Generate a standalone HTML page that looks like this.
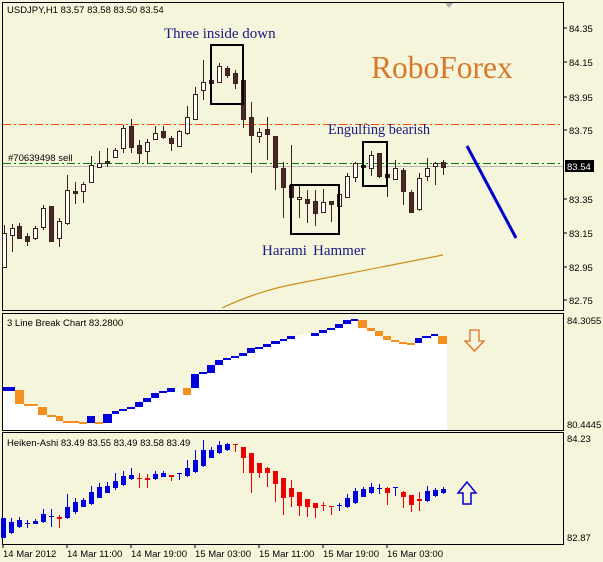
<!DOCTYPE html>
<html><head><meta charset="utf-8"><style>
html,body{margin:0;padding:0;background:#F5F5DC;width:603px;height:562px;overflow:hidden}
svg{display:block}
.ax{font-family:"Liberation Sans",sans-serif;font-size:9.5px;fill:#000}
.lb{font-family:"Liberation Sans",sans-serif;font-size:9.5px;fill:#000}
.an{font-family:"Liberation Serif",serif;font-size:15px;fill:#1a1a80}
</style></head><body>
<svg id="s" width="603" height="562" xmlns="http://www.w3.org/2000/svg">
<rect width="603" height="562" fill="#F5F5DC"/>
<rect x="2.5" y="2.5" width="561" height="308" fill="none" stroke="#000"/>
<rect x="2.5" y="313.5" width="561" height="117" fill="none" stroke="#000"/>
<rect x="2.5" y="432.5" width="561" height="112" fill="none" stroke="#000"/>
<polygon points="445,3 453,3 449,8" fill="#b0b0b0"/>
<line x1="3" y1="124.5" x2="563" y2="124.5" stroke="#ff4500" stroke-dasharray="8,3,2,3"/>
<line x1="3" y1="163.5" x2="563" y2="163.5" stroke="#008000" stroke-dasharray="8,3,2,3"/>
<line x1="3" y1="166.5" x2="563" y2="166.5" stroke="#b8b8b0"/>
<path d="M222,308 Q260,290 300,283 L443,255" fill="none" stroke="#c8901a" stroke-width="1.2"/>
<line x1="467" y1="146" x2="516" y2="238" stroke="#0000cc" stroke-width="3"/>
<g id="main"></g>
<rect x="211" y="45" width="32" height="59" fill="none" stroke="#000" stroke-width="2"/>
<rect x="291" y="185" width="48" height="49" fill="none" stroke="#000" stroke-width="2"/>
<rect x="363" y="142" width="24" height="44" fill="none" stroke="#000" stroke-width="2"/>
<text x="7" y="13" class="lb">USDJPY,H1  83.57 83.58 83.50 83.54</text>
<text x="8" y="161" class="lb" fill="#000">#70639498 sell</text>
<text x="164" y="38" class="an">Three inside down</text>
<text x="328" y="134" class="an" style="font-size:14.3px">Engulfing bearish</text>
<text x="262" y="255" class="an">Harami</text>
<text x="313" y="255" class="an">Hammer</text>
<text x="371" y="78" font-family="Liberation Serif,serif" font-size="31.5" fill="#d8782a">RoboForex</text>
<g stroke="#000"><line x1="564" y1="28" x2="567" y2="28"/><line x1="564" y1="62" x2="567" y2="62"/><line x1="564" y1="97" x2="567" y2="97"/><line x1="564" y1="130" x2="567" y2="130"/><line x1="564" y1="199" x2="567" y2="199"/><line x1="564" y1="233" x2="567" y2="233"/><line x1="564" y1="267" x2="567" y2="267"/><line x1="564" y1="300" x2="567" y2="300"/></g>
<g class="ax"><text x="569" y="32" class="ax">84.35</text><text x="569" y="66" class="ax">84.15</text><text x="569" y="101" class="ax">83.95</text><text x="569" y="134" class="ax">83.75</text><text x="569" y="203" class="ax">83.35</text><text x="569" y="237" class="ax">83.15</text><text x="569" y="271" class="ax">82.95</text><text x="569" y="304" class="ax">82.75</text></g>
<rect x="565" y="160" width="29" height="12" fill="#000"/>
<text x="567" y="170" class="ax" fill="#fff" style="fill:#fff">83.54</text>
<path id="wf" fill="#fff"/>
<g id="lb3"></g>
<text x="7" y="326" class="lb">3 Line Break Chart 83.2800</text>
<path d="M470,330 h9 v11 h5 l-9.5,10 l-9.5,-10 h5z" fill="none" stroke="#e07020" stroke-width="1.3"/>
<text x="567" y="324" class="ax">84.3055</text>
<text x="567" y="428" class="ax">80.4445</text>
<g id="ha"></g>
<text x="7" y="446" class="lb">Heiken-Ashi 83.49 83.55 83.49 83.58 83.49</text>
<path d="M467,482 l-9,11 h5 v11 h8 v-11 h5z" fill="none" stroke="#0000cc" stroke-width="1.5"/>
<text x="567" y="442" class="ax">84.23</text>
<text x="567" y="541" class="ax">82.87</text>
<g stroke="#000"><line x1="3" y1="545" x2="3" y2="548"/><line x1="67" y1="545" x2="67" y2="548"/><line x1="131" y1="545" x2="131" y2="548"/><line x1="195" y1="545" x2="195" y2="548"/><line x1="259" y1="545" x2="259" y2="548"/><line x1="323" y1="545" x2="323" y2="548"/><line x1="387" y1="545" x2="387" y2="548"/></g>
<g><text x="3" y="557" class="ax">14 Mar 2012</text><text x="67" y="557" class="ax">14 Mar 11:00</text><text x="131" y="557" class="ax">14 Mar 19:00</text><text x="195" y="557" class="ax">15 Mar 03:00</text><text x="259" y="557" class="ax">15 Mar 11:00</text><text x="323" y="557" class="ax">15 Mar 19:00</text><text x="387" y="557" class="ax">16 Mar 03:00</text></g>
</svg>
<script>
var NS="http://www.w3.org/2000/svg";
function el(p,t,a){var e=document.createElementNS(NS,t);for(var k in a)e.setAttribute(k,a[k]);p.appendChild(e);return e;}
var M=[[4,233,267,225,268,1],[12,228,235,224,252,1],[19,226,238,223,238,0],[27,236,241,233,246,0],[35,228,238,226,240,1],[43,208,227,205,230,1],[51,206,241,206,242,0],[59,221,238,218,247,1],[67,190,223,175,225,1],[75,191,193,182,204,0],[83,184,191,182,203,1],[91,165,182,156,183,1],[99,163,167,151,168,1],[107,161,163,148,167,0],[115,150,157,148,157,1],[123,128,148,125,153,1],[131,126,147,119,153,0],[139,145,153,140,163,0],[147,142,151,139,163,1],[155,133,139,126,140,1],[163,131,137,126,139,0],[171,138,143,136,151,0],[179,131,146,130,147,1],[187,117,133,106,135,1],[195,94,119,87,120,1],[203,82,90,60,100,1],[211,80,83,80,83,0],[219,66,82,63,83,1],[227,68,75,66,78,0],[235,73,83,70,89,0],[243,80,119,80,128,0],[251,117,135,102,173,0],[259,132,136,128,143,1],[267,129,134,117,160,0],[275,136,167,136,190,0],[283,168,187,162,218,0],[291,185,197,145,197,0],[299,197,199,185,218,1],[307,199,203,190,223,0],[315,201,213,190,226,0],[323,202,212,189,213,1],[331,201,204,201,222,0],[339,194,206,194,207,1],[347,176,197,173,198,1],[355,163,177,162,182,1],[363,165,167,165,167,0],[371,155,168,151,176,1],[379,153,176,153,178,0],[387,174,177,174,197,0],[395,168,179,160,180,1],[403,170,191,168,205,0],[411,192,212,190,213,0],[419,178,209,173,211,1],[427,168,176,158,181,1],[435,163,166,162,185,1],[443,162,167,160,175,0]];
var g=document.getElementById("main");
M.forEach(function(c){el(g,"line",{x1:c[0]+.5,y1:c[3],x2:c[0]+.5,y2:c[4],stroke:"#3c2020"});
el(g,"rect",{x:c[0]-1.5,y:c[1]+.5,width:4,height:Math.max(1,c[2]-c[1]),fill:c[5]?"#fff":"#4a2828",stroke:"#3c2020"});});
var B="#0000dd",O="#f39020";
var L=[[3,15,387,391,B],[15,24,390,404,O],[24,38,404,406,O],[38,47,407,415,O],[47,56,415,417,O],[56,63,416,421,O],[63,79,421,423,O],[79,87,422,424,O],[87,95,416,423,B],[95,103,422,424,O],[103,112,414,423,B],[112,119,411,414,B],[119,127,409,411,B],[127,135,407,409,B],[135,143,402,407,B],[143,151,398,402,B],[151,159,393,398,B],[159,167,391,393,B],[167,175,388,392,B],[183,191,388,395,O],[191,199,374,388,B],[199,207,372,374,B],[207,215,365,373,B],[215,223,360,365,B],[223,231,358,360,B],[231,239,356,358,B],[239,247,353,356,B],[247,255,348,353,B],[255,263,347,348,B],[263,271,344,347,B],[271,280,341,344,B],[280,287,339,341,B],[287,295,336,339,B],[311,319,333,336,B],[319,327,330,333,B],[327,335,328,330,B],[335,343,324,328,B],[343,351,320,324,B],[351,358,319,321,B],[358,367,320,328,O],[367,375,328,331,O],[375,383,331,336,O],[383,391,336,340,O],[391,399,340,342,O],[399,407,342,343,O],[407,415,343,345,O],[415,422,338,343,B],[422,431,336,338,B],[431,438,334,336,B],[438,447,336,344,O]];
var d="M3,430 ";L.forEach(function(b){d+="L"+b[0]+","+b[2]+" L"+b[1]+","+b[2]+" ";});
d+="L447,430 Z";document.getElementById("wf").setAttribute("d",d);
var g2=document.getElementById("lb3");
L.forEach(function(b){el(g2,"rect",{x:b[0],y:b[2],width:b[1]-b[0],height:Math.max(2,b[3]-b[2]),fill:b[4]});});
var H=[[3,518,538,518,538,1],[11,522,533,518,534,1],[19,520,527,517,528,1],[27,523,524,520,528,1],[35,521,524,519,524,1],[43,514,522,509,523,1],[51,516,517,509,527,1],[59,517,519,515,528,0],[67,507,518,494,519,1],[75,502,512,498,514,1],[83,500,507,498,507,1],[91,492,504,486,505,1],[99,487,498,483,498,1],[107,486,493,482,493,1],[115,481,488,473,490,1],[123,476,485,471,486,1],[131,475,479,468,480,1],[139,478,479,473,488,0],[147,478,480,474,488,0],[155,474,479,471,480,1],[163,473,477,471,477,1],[171,475,477,475,481,0],[179,473,474,473,480,1],[187,468,476,460,477,1],[195,460,472,450,473,1],[203,450,466,440,467,1],[211,450,458,447,458,1],[219,445,453,441,454,1],[227,444,450,443,451,1],[235,444,445,444,452,0],[243,447,458,447,473,0],[251,453,473,453,493,0],[259,463,473,463,478,0],[267,468,473,467,487,0],[275,471,484,471,502,0],[283,478,498,478,515,0],[291,488,497,480,507,0],[299,492,506,492,516,0],[307,499,507,499,517,0],[315,503,508,503,518,0],[323,505,506,502,511,0],[331,506,507,506,515,0],[339,505,506,503,511,1],[347,498,507,494,508,1],[355,491,503,488,504,1],[363,489,497,487,497,1],[371,487,493,483,494,1],[379,488,489,484,494,1],[387,488,493,487,505,0],[395,487,488,487,496,1],[403,492,497,491,508,0],[411,495,505,495,512,0],[419,499,501,492,511,0],[427,491,501,486,502,1],[435,490,496,488,497,1],[443,489,493,487,494,1]];
var g3=document.getElementById("ha");
H.forEach(function(c){var col=c[5]?"#0000dd":"#ee0000";el(g3,"line",{x1:c[0]+.5,y1:c[3],x2:c[0]+.5,y2:c[4],stroke:col});
el(g3,"rect",{x:c[0]-2,y:c[1],width:5,height:Math.max(1,c[2]-c[1]),fill:col});});
</script>
</body></html>
